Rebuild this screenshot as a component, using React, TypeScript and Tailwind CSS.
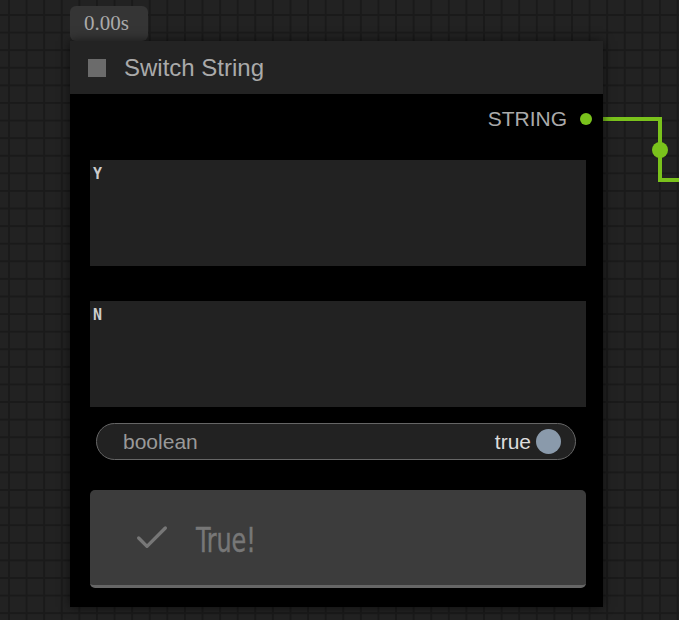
import { Check } from 'lucide-react'

export default function App() {
  return (
    <div
      className="relative w-[679px] h-[620px] overflow-hidden bg-[#222222] font-['Liberation_Sans',Arial,sans-serif]"
      style={{
        backgroundImage:
          'linear-gradient(to right, #1a1a1a 2px, transparent 2px), linear-gradient(to bottom, #1a1a1a 2px, transparent 2px)',
        backgroundSize: '17.6px 17.6px',
        backgroundPosition: '8px 14px',
      }}
    >
      {/* link wire */}
      <svg className="absolute inset-0" width="679" height="620">
        <path d="M592 119 H660 V180 H679" fill="none" stroke="#7ac21c" strokeWidth="4" />
        <circle cx="660" cy="150" r="8" fill="#7ac21c" />
      </svg>

      {/* execution time badge */}
      <div className="absolute left-[70px] top-[6px] w-[78px] h-[35px] rounded-md bg-[#353535] flex items-center pl-[14px] text-[21px] text-[#aaaaaa] font-['Liberation_Serif',serif]">
        0.00s
      </div>

      {/* node */}
      <div className="absolute left-[70px] top-[41px] w-[533px] shadow-[0_0_10px_rgba(0,0,0,0.6)]">
        <div className="h-[53px] bg-[#232323] flex items-center pl-[18px] gap-[18px]">
          <div className="w-[18px] h-[18px] bg-[#6b6b6b]" />
          <span className="text-[24px] text-[#aaaaaa]">Switch String</span>
        </div>

        <div className="bg-black flex flex-col">
          <div className="h-[50px] flex items-center justify-end pr-[11px] gap-[13px]">
            <span className="text-[21px] text-[#aaaaaa]">STRING</span>
            <div className="w-[12px] h-[12px] rounded-full bg-[#7ac21c]" />
          </div>

          <div className="mt-[16px] ml-[20px] w-[496px] h-[106px] bg-[#222222] px-[3px] py-[7px] text-[15px] font-bold text-[#cccccc] font-['DejaVu_Sans_Mono',monospace] leading-none">
            Y
          </div>

          <div className="mt-[35px] ml-[20px] w-[496px] h-[106px] bg-[#222222] px-[3px] py-[7px] text-[15px] font-bold text-[#cccccc] font-['DejaVu_Sans_Mono',monospace] leading-none">
            N
          </div>

          <div className="mt-[16px] ml-[26px] w-[480px] h-[37px] rounded-full border border-[#666666] bg-[#222222] flex items-center pl-[26px] pr-[14px]">
            <span className="text-[21px] text-[#999999]">boolean</span>
            <span className="ml-auto text-[21px] text-[#dddddd]">true</span>
            <div className="ml-[5px] w-[25px] h-[25px] rounded-full bg-[#8a9aab]" />
          </div>

          <div className="mt-[30px] mb-[19px] ml-[20px] w-[496px] h-[98px] rounded-[5px] bg-[#3c3c3c] border-b-[3px] border-[#666666] flex items-center pl-[42px] gap-[24px]">
            <Check size={40} strokeWidth={2} className="text-[#777777]" />
            <span className="inline-block mt-[5px] origin-left scale-x-[0.78] text-[34px] text-[#777777] [-webkit-text-stroke:0.4px_#777777] font-['Liberation_Sans_Narrow','DejaVu_Sans_Condensed',sans-serif]">
              True!
            </span>
          </div>
        </div>
      </div>
    </div>
  )
}
